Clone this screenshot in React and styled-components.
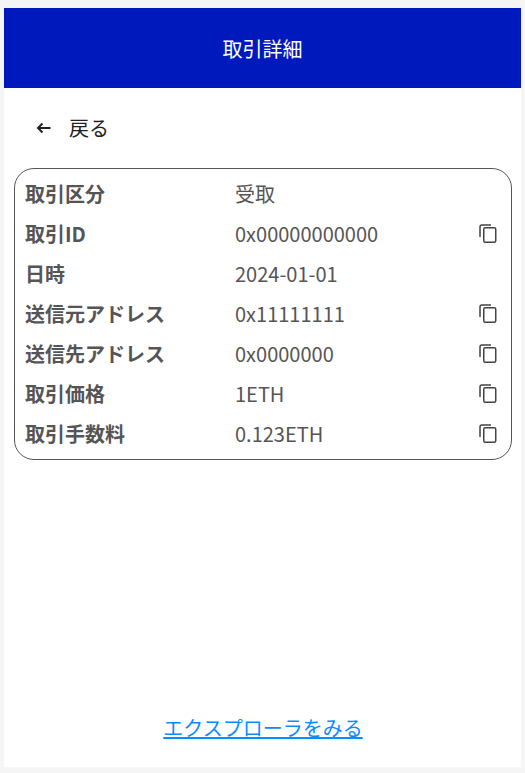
import styled, { createGlobalStyle } from 'styled-components';

const GlobalStyle = createGlobalStyle`
  html, body {
    margin: 0;
    padding: 0;
    background-color: #f5f5f5;
  }
  body {
    font-family: "Noto Sans CJK JP", "Noto Sans", sans-serif;
  }
`;

const Page = styled.div`
  box-sizing: border-box;
  width: 525px;
  height: 773px;
  padding: 8px 4px 6px;
`;

const Panel = styled.main`
  display: flex;
  flex-direction: column;
  height: 100%;
  background-color: #fff;
`;

const Header = styled.header`
  display: flex;
  align-items: center;
  justify-content: center;
  flex-shrink: 0;
  height: 80px;
  background-color: #0019bd;
  color: #fff;
  font-size: 20px;
`;

const BackRow = styled.div`
  display: flex;
  align-items: center;
  height: 40px;
  margin-top: 19px;
  padding-left: 32px;
  color: #222;
  font-size: 20px;
`;

const BackArrow = styled.svg`
  width: 15px;
  height: 12px;
  margin: 2px 18px 0 0;
`;

const DetailCard = styled.section`
  box-sizing: border-box;
  width: 498px;
  height: 292px;
  margin: 21px 0 0 10px;
  padding: 4px 10px 7px;
  border: 1px solid #555;
  border-radius: 20px;
`;

const Row = styled.div`
  display: flex;
  align-items: center;
  height: 40px;
  color: #555;
`;

const Label = styled.span`
  flex: 0 0 210px;
  font-size: 20px;
  font-weight: 700;
`;

const Value = styled.span`
  flex: 1;
  font-size: 20px;
`;

const CopyIcon = styled.svg`
  flex-shrink: 0;
  width: 18px;
  height: 19px;
  margin-right: 4px;
`;

const Footer = styled.footer`
  display: flex;
  justify-content: center;
  margin-top: auto;
  padding: 0 0 25px 1px;
`;

const ExplorerLink = styled.a`
  color: #0a8cff;
  font-size: 20px;
  text-decoration: underline;
  cursor: pointer;
`;

const rows = [
  { label: '取引区分', value: '受取' },
  { label: '取引ID', value: '0x00000000000', copy: true },
  { label: '日時', value: '2024-01-01' },
  { label: '送信元アドレス', value: '0x11111111', copy: true },
  { label: '送信先アドレス', value: '0x0000000', copy: true },
  { label: '取引価格', value: '1ETH', copy: true },
  { label: '取引手数料', value: '0.123ETH', copy: true },
];

const Copy = () => (
  <CopyIcon viewBox="0 0 18 19" fill="none" stroke="#444" strokeWidth="1.5">
    <path d="M1 13V3a2 2 0 0 1 2-2h9" />
    <rect x="4.75" y="3.75" width="12" height="14.5" rx="1.5" />
  </CopyIcon>
);

const App = () => {
  return (
    <Page>
      <GlobalStyle />
      <Panel>
        <Header>取引詳細</Header>
        <BackRow>
          <BackArrow viewBox="0 0 15 12" fill="none" stroke="#222" strokeWidth="2">
            <path d="M14.5 6H2M6.5 1.5 2 6l4.5 4.5" />
          </BackArrow>
          戻る
        </BackRow>
        <DetailCard>
          {rows.map((row) => (
            <Row key={row.label}>
              <Label>{row.label}</Label>
              <Value>{row.value}</Value>
              {row.copy && <Copy />}
            </Row>
          ))}
        </DetailCard>
        <Footer>
          <ExplorerLink>エクスプローラをみる</ExplorerLink>
        </Footer>
      </Panel>
    </Page>
  );
};

export default App;
